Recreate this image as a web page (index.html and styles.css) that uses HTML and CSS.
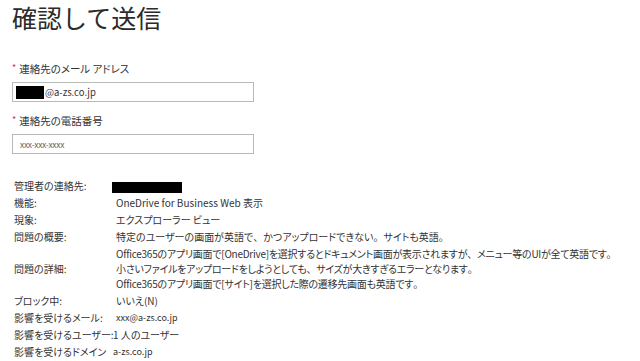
FILE: index.html
```html
<!DOCTYPE html>
<html lang="ja">
<head>
<meta charset="utf-8">
<title>確認して送信</title>
<link rel="stylesheet" href="styles.css">
</head>
<body>
<main class="page">
  <h1 class="title">確認して送信</h1>

  <div class="field">
    <label class="field-label"><span class="req">*</span>連絡先のメール アドレス</label>
    <div class="input"><span class="redact redact-mail"></span><span class="input-text">@a-zs.co.jp</span></div>
  </div>

  <div class="field">
    <label class="field-label"><span class="req">*</span>連絡先の電話番号</label>
    <div class="input"><span class="placeholder">xxx-xxx-xxxx</span></div>
  </div>

  <div class="summary">
    <div class="k">管理者の連絡先:</div>
    <div class="v"><span class="redact redact-admin"></span></div>

    <div class="k">機能:</div>
    <div class="v">OneDrive for Business Web 表示</div>

    <div class="k">現象:</div>
    <div class="v">エクスプローラー ビュー</div>

    <div class="k">問題の概要:</div>
    <div class="v">特定のユーザーの画面が英語で<span class="fw">、</span>かつアップロードできない<span class="fw">。</span>サイトも英語<span class="fw">。</span></div>

    <div class="k">問題の詳細:</div>
    <div class="v condensed">Office365のアプリ画面で[OneDrive]を選択するとドキュメント画面が表示されますが<span class="fw">、</span>メニュー等のUIが全て英語です<span class="fw">。</span><br>小さいファイルをアップロードをしようとしても<span class="fw">、</span>サイズが大きすぎるエラーとなります<span class="fw">。</span><br>Office365のアプリ画面で[サイト]を選択した際の遷移先画面も英語です<span class="fw">。</span></div>

    <div class="k">ブロック中:</div>
    <div class="v">いいえ(N)</div>

    <div class="k">影響を受けるメール:</div>
    <div class="v small">xxx@a-zs.co.jp</div>

    <div class="k">影響を受けるユーザー:</div>
    <div class="v tight">1 人のユーザー</div>

    <div class="k">影響を受けるドメイン</div>
    <div class="v small tight">a-zs.co.jp</div>
  </div>
</main>
</body>
</html>
```

FILE: styles.css
```css
html, body {
  margin: 0;
  padding: 0;
  background: #ffffff;
}

.page {
  padding: 2px 0 0 12px;
  font-family: "Noto Sans CJK JP", "Noto Sans", sans-serif;
  color: #333333;
  font-feature-settings: "palt";
}

.title {
  margin: 0;
  font-size: 25px;
  line-height: 31px;
  font-weight: 400;
  color: #2b2b2b;
  font-feature-settings: normal;
}

.field {
  display: flex;
  flex-direction: column;
  gap: 5px;
  width: 242px;
}

.field:first-of-type {
  margin-top: 29px;
}

.field + .field {
  margin-top: 12px;
}

.field-label {
  font-size: 10.5px;
  line-height: 14px;
  color: #333333;
}

.req {
  color: #d13438;
  font-size: 9px;
  margin-right: 3px;
  position: relative;
  top: -2px;
}

.input {
  box-sizing: border-box;
  height: 20px;
  border: 1px solid #b5bcb5;
  display: flex;
  align-items: center;
  padding: 0 4px 0 3px;
  font-size: 10px;
}

.input-text {
  color: #333333;
  font-size: 9.5px;
  margin-left: 1px;
}

.placeholder {
  color: #666666;
  font-size: 8.5px;
  padding-left: 4px;
  letter-spacing: -0.3px;
}

.redact {
  display: inline-block;
  background: #000000;
}

.redact-mail {
  width: 28px;
  height: 13px;
}

.redact-admin {
  width: 70px;
  height: 11px;
  margin-left: -4px;
  vertical-align: middle;
}

.summary {
  margin-top: 23px;
  padding-left: 2px;
  display: grid;
  grid-template-columns: 102px 1fr;
  font-size: 10px;
  line-height: 15px;
  color: #333333;
}

.k, .v {
  padding: 1px 0;
  white-space: nowrap;
}

.k {
  align-self: center;
  overflow: hidden;
}

.fw {
  font-feature-settings: normal;
}

.v.condensed {
  letter-spacing: -0.25px;
}

.v.small {
  font-size: 9px;
}

.v.tight {
  margin-left: -3px;
}
```
